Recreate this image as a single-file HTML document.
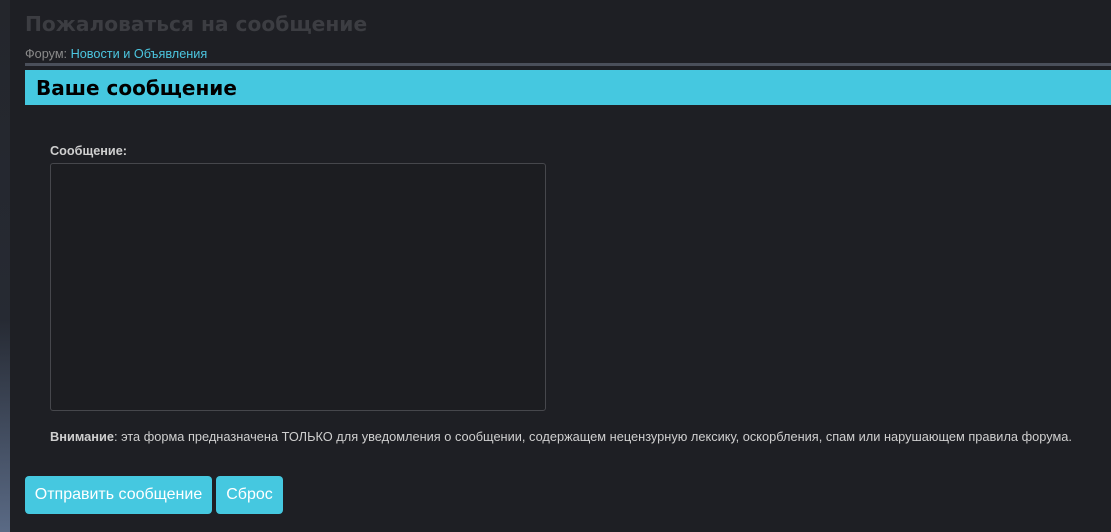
<!DOCTYPE html>
<html><head><meta charset="utf-8"><style>
body{margin:0;width:1111px;height:532px;background:#1e1f24;font-family:"Liberation Sans",sans-serif;position:relative;overflow:hidden}
.strip{position:absolute;left:0;top:0;width:10px;height:532px;background:linear-gradient(#24262c 0%,#262a33 60%,#5a6a85 100%)}
.a{position:absolute;white-space:nowrap}
</style></head><body>
<div class="strip"></div>
<div class="a" style="left:25px;top:12px;font-family:'DejaVu Sans',sans-serif;font-size:20.2px;font-weight:bold;color:#3c3d42">Пожаловаться на сообщение</div>
<div class="a" style="left:25px;top:47px;font-size:12.7px;color:#8a8a8a">Форум: <span style="color:#4cc6e0">Новости и Объявления</span></div>
<div class="a" style="left:25px;top:63px;width:1086px;height:3px;background:#4a4f5a"></div>
<div class="a" style="left:25px;top:70px;width:1086px;height:35px;background:#45c8e0"></div>
<div class="a" style="left:36px;top:76px;font-family:'DejaVu Sans',sans-serif;font-size:20px;font-weight:bold;color:#000">Ваше сообщение</div>
<div class="a" style="left:50px;top:144px;font-size:12.7px;font-weight:bold;color:#cfcfcf">Сообщение:</div>
<div class="a" style="left:50px;top:163px;width:494px;height:246px;border:1px solid #46474c;border-radius:3px;background:#1c1d21"></div>
<div class="a" style="left:50px;top:429px;font-size:12.8px;color:#cfcfcf"><b>Внимание</b>: эта форма предназначена ТОЛЬКО для уведомления о сообщении, содержащем нецензурную лексику, оскорбления, спам или нарушающем правила форума.</div>
<div class="a" style="left:25px;top:476px;width:187px;height:38px;background:#45c8e0;border-radius:4px;color:#fff;font-size:16px;line-height:38px;text-align:center">Отправить сообщение</div>
<div class="a" style="left:216px;top:476px;width:67px;height:38px;background:#45c8e0;border-radius:4px;color:#fff;font-size:16px;line-height:38px;text-align:center">Сброс</div>
</body></html>
